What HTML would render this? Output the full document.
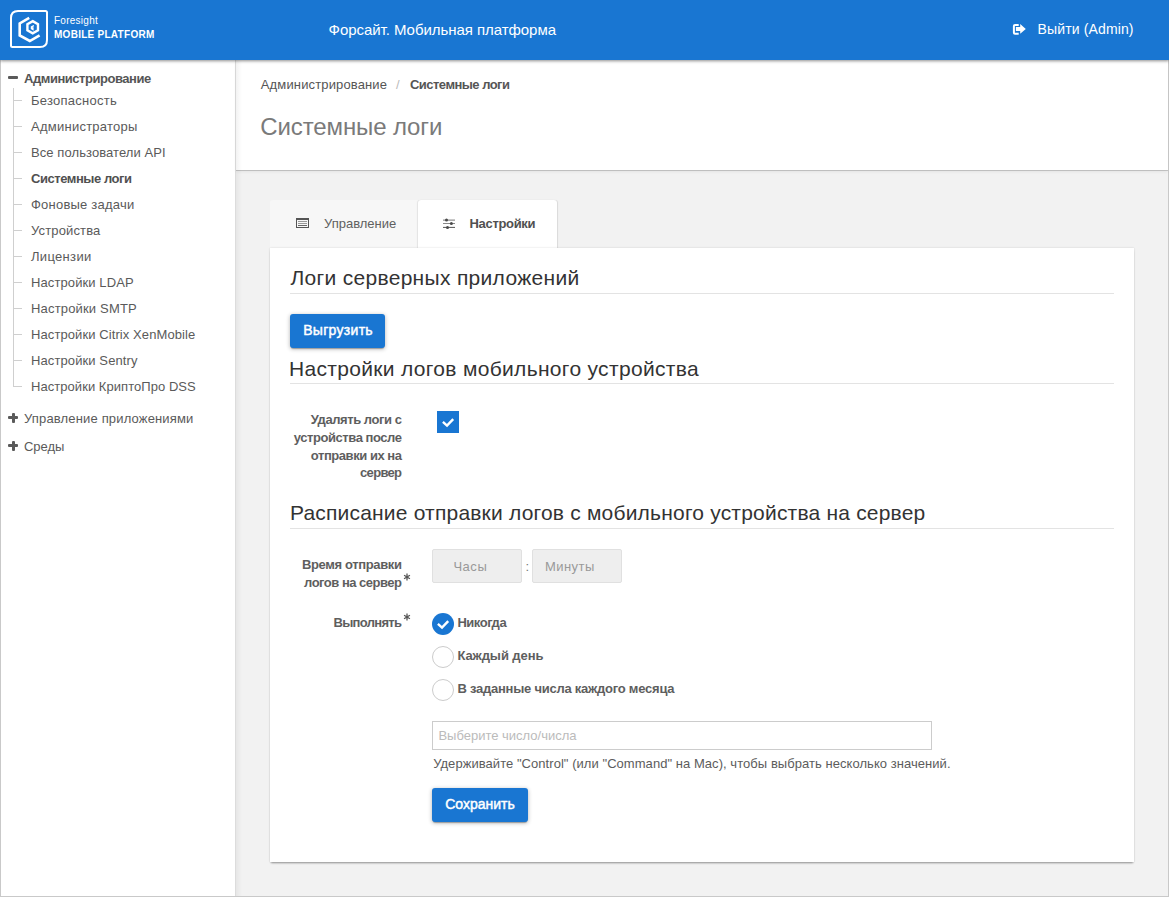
<!DOCTYPE html>
<html><head><meta charset="utf-8">
<style>
*{box-sizing:border-box;margin:0;padding:0}
html,body{width:1169px;height:897px;overflow:hidden;background:#fff}
body{position:relative;font-family:"Liberation Sans",sans-serif;color:#555}
.a{position:absolute;white-space:nowrap;line-height:1}
.bx{position:absolute}
#hdr{position:absolute;left:0;top:0;width:1169px;height:60px;background:#1976d2;box-shadow:0 1px 3px rgba(0,0,0,.45);z-index:5}
</style></head><body>
<div class="bx" style="left:0;top:60px;width:236px;height:837px;background:#fff;border-left:1px solid #c9c9c9;border-right:1px solid #dcdcdc"></div>
<div class="bx" style="left:236px;top:60px;width:933px;height:837px;background:#f2f2f2;border-right:1px solid #c9c9c9"></div>
<div class="bx" style="left:236px;top:60px;width:932px;height:110px;background:#fff;box-shadow:0 1px 0 rgba(0,0,0,.17),0 2px 3px rgba(0,0,0,.06)"></div>
<div class="bx" style="left:236px;top:60px;width:6px;height:836px;background:linear-gradient(to right,rgba(0,0,0,.05),rgba(0,0,0,0));z-index:2"></div>
<div class="bx" style="left:0;top:896px;width:1169px;height:1px;background:#c9c9c9;z-index:6"></div>
<div id="hdr">
<svg class="a" style="left:0;top:0" width="60" height="60" viewBox="0 0 60 60">
<path d="M18 11 H45.5 Q47 11 47 12.5 V40 Q47 47 40 47 H12.5 Q11 47 11 45.5 V18 Q11 11 18 11 Z" fill="none" stroke="#fff" stroke-width="2"/>
<path d="M29.2 17.9 L19.7 23.4 V35.4 L29.8 41 L39.6 35.3" fill="none" stroke="#fff" stroke-width="2.6" stroke-linejoin="miter"/>
<path d="M32.7 21.1 L38 24.15 V30.25 L32.7 33.3 L27.4 30.25 V24.15 Z" fill="none" stroke="#fff" stroke-width="2.4"/>
<path d="M33.9 25.7 L31.5 26.9 V28.7 L32.9 29.5 V27.3" fill="none" stroke="#fff" stroke-width="1.45"/>
</svg>
<div class="a" style="left:54px;top:15.73px;font-size:10px;color:#fff;letter-spacing:0.260px;">Foresight</div>
<div class="a" style="left:54px;top:30.24px;font-size:10px;font-weight:bold;color:#fff;letter-spacing:0.270px;">MOBILE PLATFORM</div>
<div class="a" style="left:328.6px;top:21.60px;font-size:15px;color:#fff;letter-spacing:-0.050px;">Форсайт. Мобильная платформа</div>
<svg class="a" style="left:1008px;top:20px" width="24" height="20" viewBox="0 0 24 20">
<path d="M10.7 5 H7 Q5.9 5 5.9 6.1 V12.7 Q5.9 13.8 7 13.8 H10.7" fill="none" stroke="#fff" stroke-width="2"/>
<path d="M7.9 6.9 H12.2 V4 L17.8 8.9 L12.2 13.8 V10.9 H7.9 Z" fill="#fff"/>
</svg>
<div class="a" style="left:1037.6px;top:21.75px;font-size:14px;color:#fff;letter-spacing:0.130px;">Выйти (Admin)</div>
</div>
<div class="bx" style="left:8px;top:76px;width:10px;height:3px;background:#5a5a5a;border-radius:1px"></div>
<div class="a" style="left:24px;top:72.00px;font-size:13px;font-weight:bold;color:#555;letter-spacing:-0.460px;">Администрирование</div>
<div class="bx" style="left:13px;top:88px;width:1px;height:299px;background:#cfcfcf"></div>
<div class="bx" style="left:13px;top:100px;width:9px;height:1px;background:#cfcfcf"></div>
<div class="a" style="left:31px;top:94.00px;font-size:13px;color:#5a5a5a;letter-spacing:0.260px;">Безопасность</div>
<div class="bx" style="left:13px;top:126px;width:9px;height:1px;background:#cfcfcf"></div>
<div class="a" style="left:31px;top:120.00px;font-size:13px;color:#5a5a5a;letter-spacing:0.250px;">Администраторы</div>
<div class="bx" style="left:13px;top:152px;width:9px;height:1px;background:#cfcfcf"></div>
<div class="a" style="left:31px;top:146.00px;font-size:13px;color:#5a5a5a;letter-spacing:0.080px;">Все пользователи API</div>
<div class="bx" style="left:13px;top:178px;width:9px;height:1px;background:#cfcfcf"></div>
<div class="a" style="left:31px;top:172.00px;font-size:13px;font-weight:bold;color:#505050;letter-spacing:-0.450px;">Системные логи</div>
<div class="bx" style="left:13px;top:204px;width:9px;height:1px;background:#cfcfcf"></div>
<div class="a" style="left:31px;top:198.00px;font-size:13px;color:#5a5a5a;letter-spacing:0.220px;">Фоновые задачи</div>
<div class="bx" style="left:13px;top:230px;width:9px;height:1px;background:#cfcfcf"></div>
<div class="a" style="left:31px;top:224.00px;font-size:13px;color:#5a5a5a;letter-spacing:0.140px;">Устройства</div>
<div class="bx" style="left:13px;top:256px;width:9px;height:1px;background:#cfcfcf"></div>
<div class="a" style="left:31px;top:250.00px;font-size:13px;color:#5a5a5a;letter-spacing:0.320px;">Лицензии</div>
<div class="bx" style="left:13px;top:282px;width:9px;height:1px;background:#cfcfcf"></div>
<div class="a" style="left:31px;top:276.00px;font-size:13px;color:#5a5a5a;letter-spacing:0.100px;">Настройки LDAP</div>
<div class="bx" style="left:13px;top:308px;width:9px;height:1px;background:#cfcfcf"></div>
<div class="a" style="left:31px;top:302.00px;font-size:13px;color:#5a5a5a;letter-spacing:0.170px;">Настройки SMTP</div>
<div class="bx" style="left:13px;top:334px;width:9px;height:1px;background:#cfcfcf"></div>
<div class="a" style="left:31px;top:328.00px;font-size:13px;color:#5a5a5a;letter-spacing:0.090px;">Настройки Citrix XenMobile</div>
<div class="bx" style="left:13px;top:360px;width:9px;height:1px;background:#cfcfcf"></div>
<div class="a" style="left:31px;top:354.00px;font-size:13px;color:#5a5a5a;letter-spacing:0.100px;">Настройки Sentry</div>
<div class="bx" style="left:13px;top:386px;width:9px;height:1px;background:#cfcfcf"></div>
<div class="a" style="left:31px;top:380.00px;font-size:13px;color:#5a5a5a;letter-spacing:0.050px;">Настройки КриптоПро DSS</div>
<div class="bx" style="left:8px;top:416px;width:10px;height:3px;background:#5a5a5a;border-radius:1px"></div>
<div class="bx" style="left:11.5px;top:413px;width:3px;height:10px;background:#5a5a5a;border-radius:1px"></div>
<div class="a" style="left:24px;top:412.00px;font-size:13px;color:#5a5a5a;letter-spacing:0.160px;">Управление приложениями</div>
<div class="bx" style="left:8px;top:444px;width:10px;height:3px;background:#5a5a5a;border-radius:1px"></div>
<div class="bx" style="left:11.5px;top:441px;width:3px;height:10px;background:#5a5a5a;border-radius:1px"></div>
<div class="a" style="left:24px;top:439.70px;font-size:13px;color:#5a5a5a;letter-spacing:-0.040px;">Среды</div>
<div class="a" style="left:260.8px;top:77.80px;font-size:13px;color:#555;letter-spacing:0.140px;">Администрирование</div>
<div class="a" style="left:396px;top:77.80px;font-size:13px;color:#bbb;">/</div>
<div class="a" style="left:410px;top:77.80px;font-size:13px;font-weight:bold;color:#555;letter-spacing:-0.530px;">Системные логи</div>
<div class="a" style="left:260.3px;top:115.08px;font-size:24px;color:#7a7a7a;letter-spacing:-0.120px;">Системные логи</div>
<div class="bx" style="left:270px;top:200px;width:148px;height:48px;background:#f7f7f7;border-radius:3px 0 0 0"></div>
<div class="bx" style="left:418px;top:200px;width:139px;height:48px;background:#fff;border-radius:3px 3px 0 0;box-shadow:1px 0 1px rgba(0,0,0,.10),-1px 0 1px rgba(0,0,0,.08);z-index:1"></div>
<svg class="a" style="left:290px;top:210px;z-index:4" width="30" height="25" viewBox="0 0 30 25">
<rect x="6.5" y="8.5" width="12" height="9" fill="none" stroke="#555" stroke-width="1"/>
<rect x="6" y="8" width="13" height="2" fill="#555"/>
<rect x="8" y="11" width="9" height="1" fill="#999"/>
<rect x="8" y="13" width="9" height="1" fill="#999"/>
<rect x="8" y="15" width="9" height="1" fill="#666"/>
</svg>
<div class="a" style="left:324px;top:217.30px;font-size:13px;color:#606060;">Управление</div>
<svg class="a" style="left:437px;top:210px;z-index:4" width="30" height="25" viewBox="0 0 30 25">
<rect x="6" y="9.6" width="12" height="1" fill="#777"/>
<rect x="6" y="13" width="12" height="1" fill="#888"/>
<rect x="6" y="16.9" width="12" height="1" fill="#555"/>
<circle cx="9.5" cy="10.1" r="1.5" fill="#4a4a4a"/>
<circle cx="14.4" cy="13.5" r="1.5" fill="#4a4a4a"/>
<circle cx="10.5" cy="17.4" r="1.5" fill="#4a4a4a"/>
</svg>
<div class="a" style="left:469.5px;top:217.30px;font-size:13px;font-weight:bold;color:#505050;letter-spacing:-0.320px;z-index:4">Настройки</div>
<div class="bx" style="left:270px;top:248px;width:864px;height:614px;background:#fff;box-shadow:0 2px 2px -1px rgba(0,0,0,.38),0 0 2px rgba(0,0,0,.14);z-index:2"></div>
<div class="a" style="left:290.4px;top:267.42px;font-size:21px;color:#333;letter-spacing:0.310px;z-index:4">Логи серверных приложений</div>
<div class="bx" style="left:290px;top:293px;width:824px;height:1px;background:#e3e3e3;z-index:4"></div>
<div class="bx" style="left:290px;top:314px;width:95px;height:34px;background:#1976d2;border-radius:3px;box-shadow:0 1px 4px rgba(0,0,0,.3),0 2px 1px -1px rgba(0,0,0,.25);z-index:4"></div>
<div class="a" style="left:303.2px;top:323.15px;font-size:14px;color:#fff;letter-spacing:0.300px;z-index:5;-webkit-text-stroke:0.45px #fff">Выгрузить</div>
<div class="a" style="left:289.0px;top:357.82px;font-size:21px;color:#333;letter-spacing:0.320px;z-index:4">Настройки логов мобильного устройства</div>
<div class="bx" style="left:290px;top:383px;width:824px;height:1px;background:#e3e3e3;z-index:4"></div>
<div class="a" style="right:767px;top:413.00px;font-size:13px;font-weight:bold;color:#5e5e5e;letter-spacing:-0.430px;margin-right:0.430px;z-index:4">Удалять логи с</div>
<div class="a" style="right:767px;top:431.00px;font-size:13px;font-weight:bold;color:#5e5e5e;letter-spacing:-0.440px;margin-right:0.440px;z-index:4">устройства после</div>
<div class="a" style="right:767px;top:449.00px;font-size:13px;font-weight:bold;color:#5e5e5e;letter-spacing:-0.450px;margin-right:0.450px;z-index:4">отправки их на</div>
<div class="a" style="right:767px;top:466.00px;font-size:13px;font-weight:bold;color:#5e5e5e;letter-spacing:-0.690px;margin-right:0.690px;z-index:4">сервер</div>
<svg class="a" style="left:437px;top:411px;z-index:4" width="22" height="22" viewBox="0 0 22 22">
<rect width="22" height="22" fill="#1976d2"/>
<path d="M5.9 10.9 L10 14.6 L16.2 8.1" fill="none" stroke="#fff" stroke-width="2.4"/>
</svg>
<div class="a" style="left:289.9px;top:502.02px;font-size:21px;color:#333;letter-spacing:0.200px;z-index:4">Расписание отправки логов с мобильного устройства на сервер</div>
<div class="bx" style="left:290px;top:528px;width:824px;height:1px;background:#e3e3e3;z-index:4"></div>
<div class="a" style="right:767px;top:558.00px;font-size:13px;font-weight:bold;color:#5e5e5e;letter-spacing:-0.360px;margin-right:0.360px;z-index:4">Время отправки</div>
<div class="a" style="right:767px;top:576.00px;font-size:13px;font-weight:bold;color:#5e5e5e;letter-spacing:-0.500px;margin-right:0.500px;z-index:4">логов на сервер</div>
<svg class="a" style="left:402.0px;top:572.0px;z-index:4" width="10" height="10" viewBox="0 0 10 10"><path d="M5 1.6 V8.4 M2.06 3.3 L7.94 6.7 M2.06 6.7 L7.94 3.3" stroke="#555" stroke-width="1.25"/></svg>
<div class="bx" style="left:432px;top:549px;width:90px;height:34px;background:#eee;border:1px solid #e0e0e0;border-radius:2px;z-index:4"></div>
<div class="bx" style="left:532px;top:549px;width:90px;height:34px;background:#eee;border:1px solid #e0e0e0;border-radius:2px;z-index:4"></div>
<div class="a" style="left:453.4px;top:560.00px;font-size:13px;color:#999;letter-spacing:0.530px;z-index:5">Часы</div>
<div class="a" style="left:545.0px;top:560.00px;font-size:13px;color:#999;letter-spacing:0.450px;z-index:5">Минуты</div>
<div class="a" style="left:525.5px;top:559.50px;font-size:13px;color:#777;z-index:5">:</div>
<div class="a" style="right:767px;top:616.00px;font-size:13px;font-weight:bold;color:#5e5e5e;letter-spacing:-0.690px;margin-right:0.690px;z-index:4">Выполнять</div>
<svg class="a" style="left:401.9px;top:611.9px;z-index:4" width="10" height="10" viewBox="0 0 10 10"><path d="M5 1.6 V8.4 M2.06 3.3 L7.94 6.7 M2.06 6.7 L7.94 3.3" stroke="#555" stroke-width="1.25"/></svg>
<svg class="a" style="left:432px;top:613px;z-index:4" width="22" height="22" viewBox="0 0 22 22">
<circle cx="11" cy="11" r="11" fill="#1976d2"/>
<path d="M5.9 10.9 L10 14.6 L16.2 8.1" fill="none" stroke="#fff" stroke-width="2.4"/>
</svg>
<div class="bx" style="left:432px;top:646px;width:22px;height:22px;border:1px solid #ccc;border-radius:50%;z-index:4"></div>
<div class="bx" style="left:432px;top:679px;width:22px;height:22px;border:1px solid #ccc;border-radius:50%;z-index:4"></div>
<div class="a" style="left:457.4px;top:616.00px;font-size:13px;font-weight:bold;color:#5e5e5e;letter-spacing:-0.470px;z-index:4">Никогда</div>
<div class="a" style="left:457.4px;top:649.00px;font-size:13px;font-weight:bold;color:#5e5e5e;letter-spacing:-0.080px;z-index:4">Каждый день</div>
<div class="a" style="left:457.4px;top:682.00px;font-size:13px;font-weight:bold;color:#5e5e5e;letter-spacing:-0.240px;z-index:4">В заданные числа каждого месяца</div>
<div class="bx" style="left:432px;top:721px;width:500px;height:29px;background:#fff;border:1px solid #ccc;z-index:4"></div>
<div class="a" style="left:438.4px;top:729.00px;font-size:13px;color:#bbb;z-index:5">Выберите число/числа</div>
<div class="a" style="left:433.2px;top:757.00px;font-size:13px;color:#5c5c5c;letter-spacing:0.050px;z-index:4">Удерживайте "Control" (или "Command" на Mac), чтобы выбрать несколько значений.</div>
<div class="bx" style="left:432px;top:788px;width:96px;height:34px;background:#1976d2;border-radius:3px;box-shadow:0 1px 4px rgba(0,0,0,.3),0 2px 1px -1px rgba(0,0,0,.25);z-index:4"></div>
<div class="a" style="left:445.2px;top:797.15px;font-size:14px;color:#fff;z-index:5;-webkit-text-stroke:0.45px #fff">Сохранить</div>
</body></html>
